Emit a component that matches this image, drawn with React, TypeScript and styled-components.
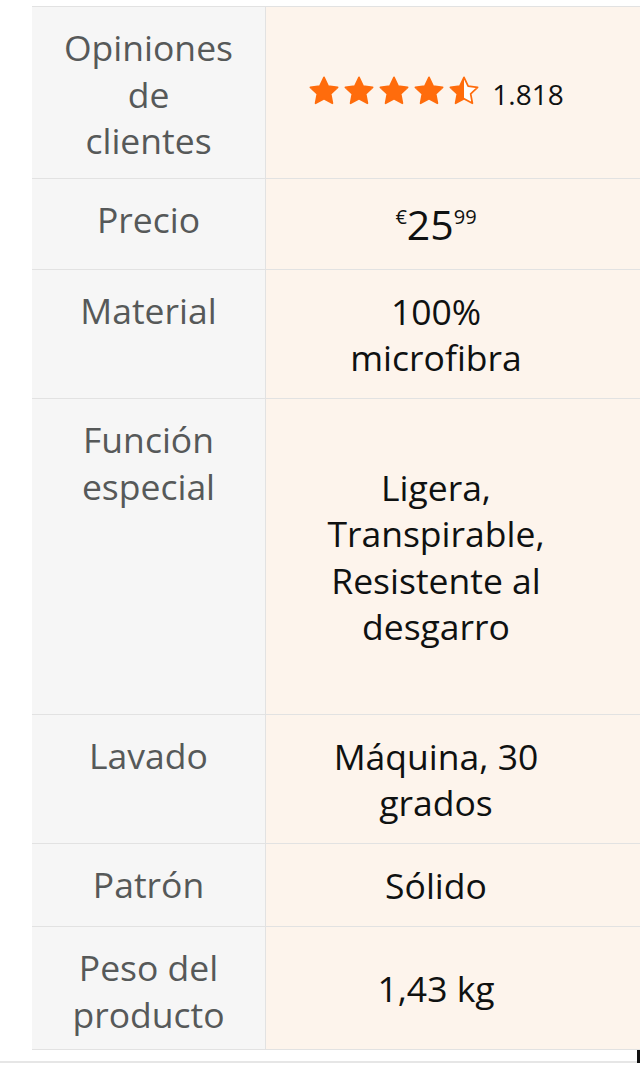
import React from "react";
import styled, { createGlobalStyle } from "styled-components";

const GlobalStyle = createGlobalStyle`
  html, body {
    margin: 0;
    padding: 0;
    background: #ffffff;
  }
  body {
    font-family: "Open Sans", "Noto Sans", sans-serif;
  }
`;

const colors = {
  label: "#565959",
  value: "#0f1111",
  labelBg: "#f6f6f6",
  valueBg: "#fdf4ec",
  border: "#e2e2e2",
  star: "#ff6c0c",
};

interface Spec {
  label: string;
  height: number;
  value: React.ReactNode;
}

const STAR_POINTS =
  "12,1.8 15.1,8.3 22.2,9.2 17,14.1 18.3,21.2 12,17.8 5.7,21.2 7,14.1 1.8,9.2 8.9,8.3";

const Star = ({ fill }: { fill: "full" | "half" }) => (
  <StarSvg viewBox="0 0 24 24">
    {fill === "half" && (
      <defs>
        <linearGradient id="halfStar" x1="0" x2="1" y1="0" y2="0">
          <stop offset="50%" stopColor={colors.star} />
          <stop offset="50%" stopColor="#ffffff" />
        </linearGradient>
      </defs>
    )}
    <polygon
      points={STAR_POINTS}
      fill={fill === "half" ? "url(#halfStar)" : colors.star}
      stroke={colors.star}
      strokeWidth={1.3}
      strokeLinejoin="round"
    />
  </StarSvg>
);

const Rating = () => (
  <RatingLine>
    <Stars>
      <Star fill="full" />
      <Star fill="full" />
      <Star fill="full" />
      <Star fill="full" />
      <Star fill="half" />
    </Stars>
    <RatingCount>1.818</RatingCount>
  </RatingLine>
);

const Price = () => (
  <PriceLine>
    <PriceSup>€</PriceSup>
    <PriceWhole>25</PriceWhole>
    <PriceSup>99</PriceSup>
  </PriceLine>
);

const specs: Spec[] = [
  { label: "Opiniones de clientes", height: 172, value: <Rating /> },
  { label: "Precio", height: 91, value: <Price /> },
  { label: "Material", height: 129, value: "100% microfibra" },
  {
    label: "Función especial",
    height: 316,
    value: "Ligera, Transpirable, Resistente al desgarro",
  },
  { label: "Lavado", height: 129, value: "Máquina, 30 grados" },
  { label: "Patrón", height: 83, value: "Sólido" },
  { label: "Peso del producto", height: 123, value: "1,43 kg" },
];

const App = () => {
  return (
    <Page>
      <GlobalStyle />
      <SpecTable>
        {specs.map((spec) => (
          <SpecRow key={spec.label} $height={spec.height}>
            <LabelCell>
              <LabelText>{spec.label}</LabelText>
            </LabelCell>
            <ValueCell>
              <ValueText>{spec.value}</ValueText>
            </ValueCell>
          </SpecRow>
        ))}
      </SpecTable>
      <Footer>
        <ScrollMark />
      </Footer>
    </Page>
  );
};

const Page = styled.div`
  width: 640px;
  padding-top: 6px;
  box-sizing: border-box;
`;

const SpecTable = styled.div`
  margin-left: 32px;
  border-top: 1px solid ${colors.border};
  display: flex;
  flex-direction: column;
`;

const SpecRow = styled.div<{ $height: number }>`
  display: grid;
  grid-template-columns: 234px 1fr;
  height: ${(p) => p.$height}px;
  box-sizing: border-box;
  border-bottom: 1px solid ${colors.border};
  font-size: 35.5px;
  line-height: 46.5px;
`;

const LabelCell = styled.div`
  background: ${colors.labelBg};
  border-right: 1px solid ${colors.border};
  padding: 17px 0 0;
  display: flex;
  justify-content: center;
  align-items: flex-start;
`;

const LabelText = styled.div`
  width: 174px;
  text-align: center;
  color: ${colors.label};
`;

const ValueCell = styled.div`
  background: ${colors.valueBg};
  display: flex;
  align-items: center;
  padding: 0 76px 0 42px;
`;

const ValueText = styled.div`
  width: 100%;
  text-align: center;
  color: ${colors.value};
  display: flex;
  justify-content: center;
`;

const RatingLine = styled.div`
  display: flex;
  align-items: center;
  gap: 12px;
  white-space: nowrap;
  margin-top: -4px;
`;

const Stars = styled.div`
  display: flex;
  gap: 3px;
`;

const StarSvg = styled.svg`
  width: 32px;
  height: 32px;
  display: block;
`;

const RatingCount = styled.span`
  font-size: 28px;
  line-height: 32px;
  padding-top: 6px;
`;

const PriceLine = styled.div`
  display: flex;
  align-items: flex-start;
  line-height: 1;
`;

const PriceWhole = styled.span`
  font-size: 41px;
`;

const PriceSup = styled.span`
  font-size: 20px;
  padding-top: 3px;
`;

const Footer = styled.div`
  height: 11px;
  border-bottom: 2px solid #e6e6e6;
  display: flex;
  justify-content: flex-end;
`;

const ScrollMark = styled.div`
  width: 3px;
  height: 13px;
  background: #111111;
`;

export default App;
